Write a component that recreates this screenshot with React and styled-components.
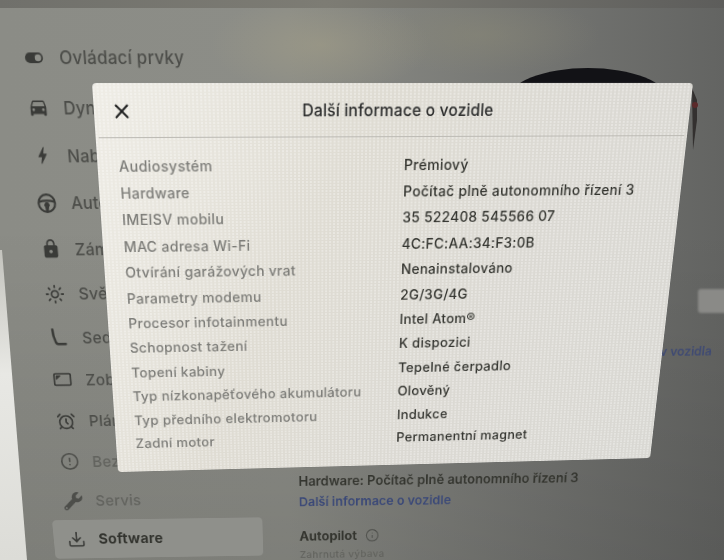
import React from "react";
import styled, { createGlobalStyle } from "styled-components";
import { Sun, AlarmClock, CircleAlert, Download, Info, X } from "lucide-react";
import { MdDirectionsCar, MdBolt, MdLock } from "react-icons/md";
import { FaWrench } from "react-icons/fa";

const Global = createGlobalStyle`
  html, body { margin: 0; padding: 0; width: 724px; height: 560px; overflow: hidden; }
  body { font-family: Inter, "Noto Sans", sans-serif; background: #7c7d78; }
  #root { width: 724px; height: 560px; }
`;

function homography(w, h, q) {
  const src = [[0, 0], [w, 0], [w, h], [0, h]];
  const A = [];
  src.forEach(([x, y], i) => {
    const [u, v] = q[i];
    A.push([x, y, 1, 0, 0, 0, -u * x, -u * y, u]);
    A.push([0, 0, 0, x, y, 1, -v * x, -v * y, v]);
  });
  for (let i = 0; i < 8; i++) {
    let p = i;
    for (let r = i + 1; r < 8; r++) if (Math.abs(A[r][i]) > Math.abs(A[p][i])) p = r;
    [A[i], A[p]] = [A[p], A[i]];
    for (let r = 0; r < 8; r++) {
      if (r === i) continue;
      const f = A[r][i] / A[i][i];
      for (let c = i; c < 9; c++) A[r][c] -= f * A[i][c];
    }
  }
  const m = A.map((row, i) => row[8] / row[i]);
  return `matrix3d(${m[0]},${m[3]},0,${m[6]},${m[1]},${m[4]},0,${m[7]},0,0,1,0,${m[2]},${m[5]},0,1)`;
}

const Photo = styled.div`
  position: relative;
  width: 724px;
  height: 560px;
  overflow: hidden;
  background:
    radial-gradient(ellipse 110px 50px at 320px 45px, rgba(165, 160, 135, 0.5), transparent 100%),
    radial-gradient(ellipse 120px 40px at 480px 35px, rgba(140, 138, 118, 0.45), transparent 100%),
    linear-gradient(180deg, rgba(0, 0, 0, 0) 40%, rgba(0, 0, 0, 0.1) 100%),
    linear-gradient(90deg, #8b8c86 0%, #8c8d87 40%, #737471 75%, #636462 100%);
`;
const TopBand = styled.div`
  height: 8px;
  background: linear-gradient(90deg, #70706b, #7d7c74 45%, #5d5d5b);
`;
const Bezel = styled.div`
  position: absolute;
  left: 0;
  top: 250px;
  width: 30px;
  height: 310px;
  background: linear-gradient(180deg, #c4c4be, #e8e8e4 40%, #dcdcd7);
  clip-path: polygon(0 0, 2px 0, 27px 100%, 0 100%);
`;
const Mount = styled.svg`
  position: absolute;
  left: 500px;
  top: 60px;
  width: 224px;
  height: 130px;
`;
const Page = styled.div`
  position: absolute;
  left: 0;
  top: 0;
  width: 760px;
  height: 620px;
  display: flex;
  transform-origin: 0 0;
  filter: blur(0.6px);
`;
const Sidebar = styled.nav`
  width: 295px;
  flex: none;
  box-sizing: border-box;
  padding: 11px 0 0 10px;
  display: flex;
  flex-direction: column;
`;
const NavItem = styled.div`
  height: 47.4px;
  display: flex;
  align-items: center;
  gap: 15px;
  padding-left: 16px;
  margin-left: -8px;
  margin-right: 44px;
  border-radius: 5px;
  font-size: 17.5px;
  font-weight: 500;
  letter-spacing: 0.2px;
  color: ${p => p.$muted ? "#62635e" : "#4c4d49"};
  background: ${p => p.$active ? "#8f908b" : "transparent"};
  svg { width: 22px; height: 22px; flex: none; color: ${p => p.$muted ? "#4d4e4a" : "#3a3b38"}; }
  ${p => p.$active && "font-weight: 700; color: #33342f; font-size: 17px;"}
`;
const Content = styled.main`
  flex: 1;
  min-width: 0;
  padding: 332px 18px 0 0;
  display: flex;
  flex-direction: column;
  font-size: 15.4px;
  font-weight: 600;
  color: #34352f;
`;
const CarLink = styled.div`
  text-align: right;
  font-size: 14px;
  color: #3f4a72;
  margin: 0 -30px 130px 0;
`;
const Block = styled.div`
  display: flex;
  flex-direction: column;
  gap: 6px;
  margin-bottom: 24px;
`;
const BlueLink = styled.div`
  color: #3a4877;
  font-size: 15px;
`;
const Title = styled.div`
  display: flex;
  align-items: center;
  gap: 10px;
  font-weight: 700;
  svg { width: 17px; height: 17px; stroke-width: 1.6; color: #4b4c48; }
`;
const Small = styled.div`
  font-size: 12px;
  font-weight: 500;
  color: #62635e;
  letter-spacing: 0.4px;
`;
const SideButton = styled.div`
  position: absolute;
  left: 698px;
  top: 289px;
  width: 30px;
  height: 24px;
  border-radius: 3px;
  background: #8a8a87;
  filter: blur(1px);
`;
const Modal = styled.section`
  position: absolute;
  left: 0;
  top: 0;
  width: 601px;
  height: 400px;
  box-sizing: border-box;
  transform-origin: 0 0;
  border-radius: 4px;
  overflow: hidden;
  background-color: #dad8d2;
  background-image:
    radial-gradient(circle at 1px 1px, rgba(255, 255, 255, 0.32) 0.8px, transparent 1.1px),
    linear-gradient(115deg, #efede6 0%, #dfdcd3 35%, #dbd9d3 65%, #d9d8d3 100%);
  background-size: 4px 3px, 100% 100%;
  filter: blur(0.4px);
  box-shadow: 0 0 1px #6a6a66;
`;
const Header = styled.header`
  height: 50px;
  display: flex;
  align-items: center;
  justify-content: center;
  position: relative;
  border-bottom: 1px solid #bdbbb5;
  margin: 0 3px;
  font-size: 15.8px;
  font-weight: 500;
  letter-spacing: 0.15px;
  color: #2a2b2b;
  padding-left: 1px;
`;
const Close = styled.span`
  position: absolute;
  left: 13px;
  top: 15px;
  line-height: 0;
  color: #1d1e1e;
  svg { width: 22px; height: 22px; stroke-width: 2; }
`;
const Rows = styled.dl`
  margin: 0;
  padding: 13px 0 0 21px;
  display: grid;
  grid-template-columns: 287px 1fr;
  grid-auto-rows: 26.4px;
  align-items: center;
  font-size: 14.3px;
  font-weight: 500;
  letter-spacing: 0.35px;
`;
const Label = styled.dt`
  color: #7c7c78;
`;
const Value = styled.dd`
  margin: 0;
  color: #33342f;
`;

const Toggle = () => (
  <svg viewBox="0 0 24 24" fill="none">
    <rect x="2" y="6.500" width="20" height="11" rx="5.500" fill="currentColor" />
    <circle cx="16.500" cy="12" r="3.600" fill="#8e8f89" />
  </svg>
);
const Wheel = () => (
  <svg viewBox="0 0 24 24" fill="none" stroke="currentColor" strokeWidth="2.400">
    <circle cx="12" cy="12" r="9.600" />
    <path d="M2.600 10.500c3-1 5.600-1.400 9.400-1.400s6.400.4 9.400 1.400M9 13.500c1.300.3 2.300 2 2.500 7.500M15 13.500c-1.300.3-2.300 2-2.500 7.500" />
    <circle cx="12" cy="13" r="1.200" fill="currentColor" />
  </svg>
);
const Seat = () => (
  <svg viewBox="0 0 24 24" fill="none" stroke="currentColor" strokeWidth="3" strokeLinecap="round" strokeLinejoin="round">
    <path d="M5 2.500c0 5 1 10 3 15 .5 1.500 1.500 2.500 3 2.500h9" />
  </svg>
);
const Screen = () => (
  <svg viewBox="0 0 24 24" fill="none" stroke="currentColor" strokeWidth="2">
    <rect x="2" y="5" width="20" height="14" rx="1.500" />
    <path d="M4.500 12 9.500 7.500H4.500Z" fill="currentColor" strokeWidth="1" />
  </svg>
);

const NAV = [
  [Toggle, "Ovládací prvky"], [MdDirectionsCar, "Dynamika"], [MdBolt, "Nabíjení"], [Wheel, "Autopilot"],
  [MdLock, "Zámky"], [Sun, "Světla"], [Seat, "Sedadlo"], [Screen, "Zobrazení"],
  [AlarmClock, "Plány"], [CircleAlert, "Bezpečnost"], [FaWrench, "Servis"], [Download, "Software"],
];
const INFO = [
  ["Audiosystém", "Prémiový"],
  ["Hardware", "Počítač plně autonomního řízení 3"],
  ["IMEISV mobilu", "35 522408 545566 07"],
  ["MAC adresa Wi-Fi", "4C:FC:AA:34:F3:0B"],
  ["Otvírání garážových vrat", "Nenainstalováno"],
  ["Parametry modemu", "2G/3G/4G"],
  ["Procesor infotainmentu", "Intel Atom®"],
  ["Schopnost tažení", "K dispozici"],
  ["Topení kabiny", "Tepelné čerpadlo"],
  ["Typ nízkonapěťového akumulátoru", "Olověný"],
  ["Typ předního elektromotoru", "Indukce"],
  ["Zadní motor", "Permanentní magnet"],
];

const pageMatrix = homography(760, 620, [[2, 20], [737, 20], [677, 580], [57, 590]]);
const modalMatrix = homography(601, 400, [[92, 83], [693, 83], [650, 458], [118, 472]]);

export default function App() {
  return (
    <Photo>
      <Global />
      <TopBand />
      <Bezel />
      <Mount viewBox="0 0 224 130">
        <ellipse cx="88" cy="40" rx="80" ry="32" fill="#121216" />
        <path d="M192 28 L197 40 L197 60 L193 90 Z" fill="#33302f" />
        <circle cx="195" cy="45" r="3" fill="#5b2a2a" />
      </Mount>
      <Page style={{ transform: pageMatrix }}>
        <Sidebar>
          {NAV.map(([Icon, text], i) => (
            <NavItem key={text} $muted={i === 9 || i === 10} $active={i === 11}>
              <Icon />
              {text}
            </NavItem>
          ))}
        </Sidebar>
        <Content>
          <CarLink>v vozidla</CarLink>
          <Block>
            <div>Hardware: Počítač plně autonomního řízení 3</div>
            <BlueLink>Další informace o vozidle</BlueLink>
          </Block>
          <Block>
            <Title>Autopilot <Info /></Title>
            <Small>Zahrnutá výbava</Small>
          </Block>
        </Content>
      </Page>
      <SideButton />
      <Modal style={{ transform: modalMatrix }}>
        <Header>
          <Close><X /></Close>
          Další informace o vozidle
        </Header>
        <Rows>
          {INFO.map(([k, v]) => (
            <React.Fragment key={k}>
              <Label>{k}</Label>
              <Value>{v}</Value>
            </React.Fragment>
          ))}
        </Rows>
      </Modal>
    </Photo>
  );
}
